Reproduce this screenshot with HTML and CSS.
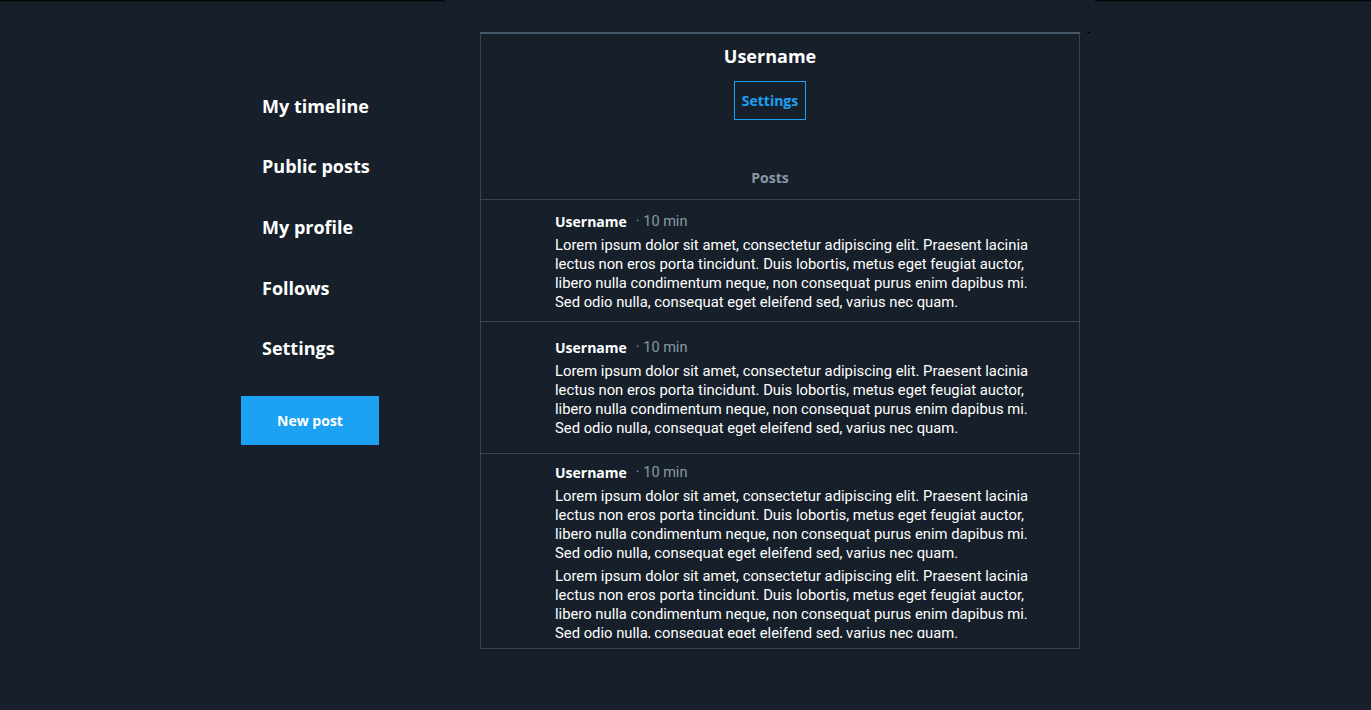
FILE: index.html
```html
<!DOCTYPE html>
<html lang="en">
<head>
<meta charset="utf-8">
<title>Profile</title>
<link rel="stylesheet" href="styles.css">
</head>
<body>
<div class="topbar">
  <div class="topbar__seg topbar__seg--left"></div>
  <div class="topbar__gap"></div>
  <div class="topbar__seg topbar__seg--right"></div>
</div>
<div class="layout">
  <nav class="nav">
    <a class="nav__item" href="#">My timeline</a>
    <a class="nav__item" href="#">Public posts</a>
    <a class="nav__item" href="#">My profile</a>
    <a class="nav__item" href="#">Follows</a>
    <a class="nav__item" href="#">Settings</a>
    <button class="nav__button" type="button">New post</button>
  </nav>
  <main class="column">
    <header class="profile">
      <h1 class="profile__name">Username</h1>
      <button class="profile__settings" type="button">Settings</button>
      <div class="profile__tab">Posts</div>
    </header>
    <section class="posts">
      <article class="post">
        <div class="post__meta"><span class="post__user">Username</span><span class="post__time">· 10 min</span></div>
        <div class="post__body">
          <p class="post__text">Lorem ipsum dolor sit amet, consectetur adipiscing elit. Praesent lacinia lectus non eros porta tincidunt. Duis lobortis, metus eget feugiat auctor, libero nulla condimentum neque, non consequat purus enim dapibus mi. Sed odio nulla, consequat eget eleifend sed, varius nec quam.</p>
        </div>
      </article>
      <article class="post">
        <div class="post__meta"><span class="post__user">Username</span><span class="post__time">· 10 min</span></div>
        <div class="post__body">
          <p class="post__text">Lorem ipsum dolor sit amet, consectetur adipiscing elit. Praesent lacinia lectus non eros porta tincidunt. Duis lobortis, metus eget feugiat auctor, libero nulla condimentum neque, non consequat purus enim dapibus mi. Sed odio nulla, consequat eget eleifend sed, varius nec quam.</p>
        </div>
      </article>
      <article class="post">
        <div class="post__meta"><span class="post__user">Username</span><span class="post__time">· 10 min</span></div>
        <div class="post__body">
          <p class="post__text">Lorem ipsum dolor sit amet, consectetur adipiscing elit. Praesent lacinia lectus non eros porta tincidunt. Duis lobortis, metus eget feugiat auctor, libero nulla condimentum neque, non consequat purus enim dapibus mi. Sed odio nulla, consequat eget eleifend sed, varius nec quam.</p>
          <p class="post__text">Lorem ipsum dolor sit amet, consectetur adipiscing elit. Praesent lacinia lectus non eros porta tincidunt. Duis lobortis, metus eget feugiat auctor, libero nulla condimentum neque, non consequat purus enim dapibus mi. Sed odio nulla, consequat eget eleifend sed, varius nec quam.</p>
        </div>
      </article>
    </section>
  </main>
  <aside class="aside"><span class="aside__mark"></span></aside>
</div>
</body>
</html>
```
FILE: styles.css
```css
* { box-sizing: border-box; }

html, body {
  margin: 0;
  height: 100%;
}

body {
  background: #17202a;
  color: #ffffff;
  font-family: Roboto, "Liberation Sans", sans-serif;
  overflow: hidden;
}

.topbar {
  display: flex;
  height: 2px;
}
.topbar__seg--left { width: 445px; background: #050607; border-bottom: 1px solid #0f151b; }
.topbar__gap { width: 650px; }
.topbar__seg--right { flex: 1; background: #050607; border-bottom: 1px solid #0f151b; }

.layout {
  display: flex;
  padding-top: 30px;
  padding-left: 241px;
}

.nav {
  width: 239px;
  display: flex;
  flex-direction: column;
  align-items: flex-start;
  padding-top: 44px;
}

.nav__item {
  display: flex;
  align-items: center;
  height: 60px;
  padding-left: 21px;
  color: #ffffff;
  text-decoration: none;
  font-family: "Open Sans", Lato, sans-serif;
  font-size: 18px;
  font-weight: 700;
}
.nav__item:nth-child(3) { height: 61px; }
.nav__item:nth-child(4) { height: 62px; }
.nav__item:nth-child(5) { height: 58px; }

.nav__button {
  margin-top: 19px;
  width: 138px;
  height: 49px;
  border: 0;
  background: #1da1f2;
  color: #ffffff;
  font-family: "Open Sans", Lato, sans-serif;
  font-size: 14px;
  font-weight: 700;
}

.column {
  width: 600px;
  height: 617px;
  border: 1px solid #38444d;
  border-top: 2px solid #44596a;
  display: flex;
  flex-direction: column;
  padding-bottom: 10px;
}

.profile {
  display: flex;
  flex-direction: column;
  align-items: center;
  padding-top: 10px;
  padding-right: 20px;
  border-bottom: 1px solid #38444d;
}

.profile__name {
  margin: 0;
  font-family: "Open Sans", Lato, sans-serif;
  font-size: 18px;
  line-height: 24px;
  font-weight: 700;
}

.profile__settings {
  margin-top: 13px;
  padding: 9px 7px;
  border: 1px solid #1da1f2;
  background: transparent;
  color: #1da1f2;
  font-family: "Open Sans", Lato, sans-serif;
  font-size: 14px;
  line-height: 19px;
  font-weight: 700;
}

.profile__tab {
  margin-top: 48px;
  padding-bottom: 12px;
  color: #8899a6;
  font-family: "Open Sans", Lato, sans-serif;
  font-size: 14px;
  line-height: 19px;
  font-weight: 700;
}

.posts {
  flex: 1;
  overflow: hidden;
}

.post {
  padding: 12px 34px 9px 74px;
  border-bottom: 1px solid #38444d;
}
.post:nth-child(2) { padding-top: 16px; padding-bottom: 15px; }
.post:nth-child(3) { padding-top: 9px; }

.post__meta {
  display: flex;
  align-items: center;
  height: 19px;
  font-size: 14.5px;
  line-height: 19px;
}

.post__user {
  font-family: "Open Sans", Lato, sans-serif;
  font-size: 14px;
  font-weight: 700;
  color: #ffffff;
}

.post__time {
  margin-left: 9px;
  color: #8899a6;
}

.post__body {
  padding-top: 5px;
  display: flex;
  flex-direction: column;
  gap: 4px;
}

.post__text {
  margin: 0;
  font-size: 14.8px;
  line-height: 19px;
  color: #ffffff;
}

.aside {
  padding-left: 7px;
}
.aside__mark {
  display: block;
  width: 3px;
  height: 1px;
  background: #000000;
}
```
